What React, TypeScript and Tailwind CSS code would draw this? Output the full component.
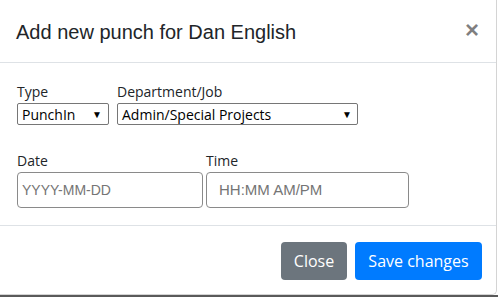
export default function App() {
  return (
    <div className="w-[498px] h-[297px] bg-white flex flex-col overflow-hidden font-['Open_Sans',sans-serif] text-[#212529]">
      <div className="w-[497px] h-[295px] shrink-0 bg-white border-r border-b border-[#d4d4d4] rounded-br-[5px] flex flex-col">
        {/* Header */}
        <div className="h-[63px] shrink-0 flex items-center justify-between pl-4 pr-[17px] border-b border-[#dee2e6]">
          <h5 className="font-['Liberation_Sans',Arial,sans-serif] text-[20px] leading-[24px] text-[#212529] pt-[1px]">
            Add new punch for Dan English
          </h5>
          <span className="font-['Liberation_Sans',Arial,sans-serif] text-[24px] font-bold leading-none text-black/50 -mt-[3px]">
            ×
          </span>
        </div>

        {/* Body */}
        <div className="h-[162px] shrink-0 pl-[17px] pt-[18px]">
          <div className="flex gap-2">
            <div className="flex flex-col">
              <label className="text-[14px] leading-[21px] mb-[1px]">Type</label>
              <div className="w-[92px] h-[22px] border border-[#767676] rounded-[2px] flex items-center justify-between pl-[4px] pr-[6px] text-[14px] text-black">
                <span>PunchIn</span>
                <span className="text-[10px] leading-none">▼</span>
              </div>
            </div>
            <div className="flex flex-col">
              <label className="text-[14px] leading-[21px] mb-[1px]">Department/Job</label>
              <div className="w-[241px] h-[22px] border border-[#767676] rounded-[2px] flex items-center justify-between pl-[4px] pr-[5px] text-[14px] text-black">
                <span>Admin/Special Projects</span>
                <span className="text-[10px] leading-none">▼</span>
              </div>
            </div>
          </div>

          <div className="flex gap-[3px] mt-[25px]">
            <div className="flex flex-col">
              <label className="text-[14px] leading-[21px] mb-[1px]">Date</label>
              <div className="w-[186px] h-[36px] border border-[#8a8a8a] rounded-[4px] flex items-center pl-[4px] font-['Liberation_Sans',Arial,sans-serif] text-[14px] text-[#757575]">
                YYYY-MM-DD
              </div>
            </div>
            <div className="flex flex-col">
              <label className="text-[14px] leading-[21px] mb-[1px]">Time</label>
              <div className="w-[203px] h-[36px] border border-[#8a8a8a] rounded-[4px] flex items-center pl-[12px] font-['Liberation_Sans',Arial,sans-serif] text-[15px] text-[#757575]">
                HH:MM AM/PM
              </div>
            </div>
          </div>
        </div>

        {/* Footer */}
        <div className="flex-1 border-t border-[#dee2e6] flex justify-end items-start gap-2 pt-4 pr-[14px]">
          <button className="w-[66px] h-[38px] rounded-[4px] bg-[#6c757d] text-white text-[16px]">
            Close
          </button>
          <button className="w-[127px] h-[38px] rounded-[4px] bg-[#007bff] text-white text-[16px]">
            Save changes
          </button>
        </div>
      </div>
      <div className="flex-1 bg-[#5a5a5a]" />
    </div>
  );
}
